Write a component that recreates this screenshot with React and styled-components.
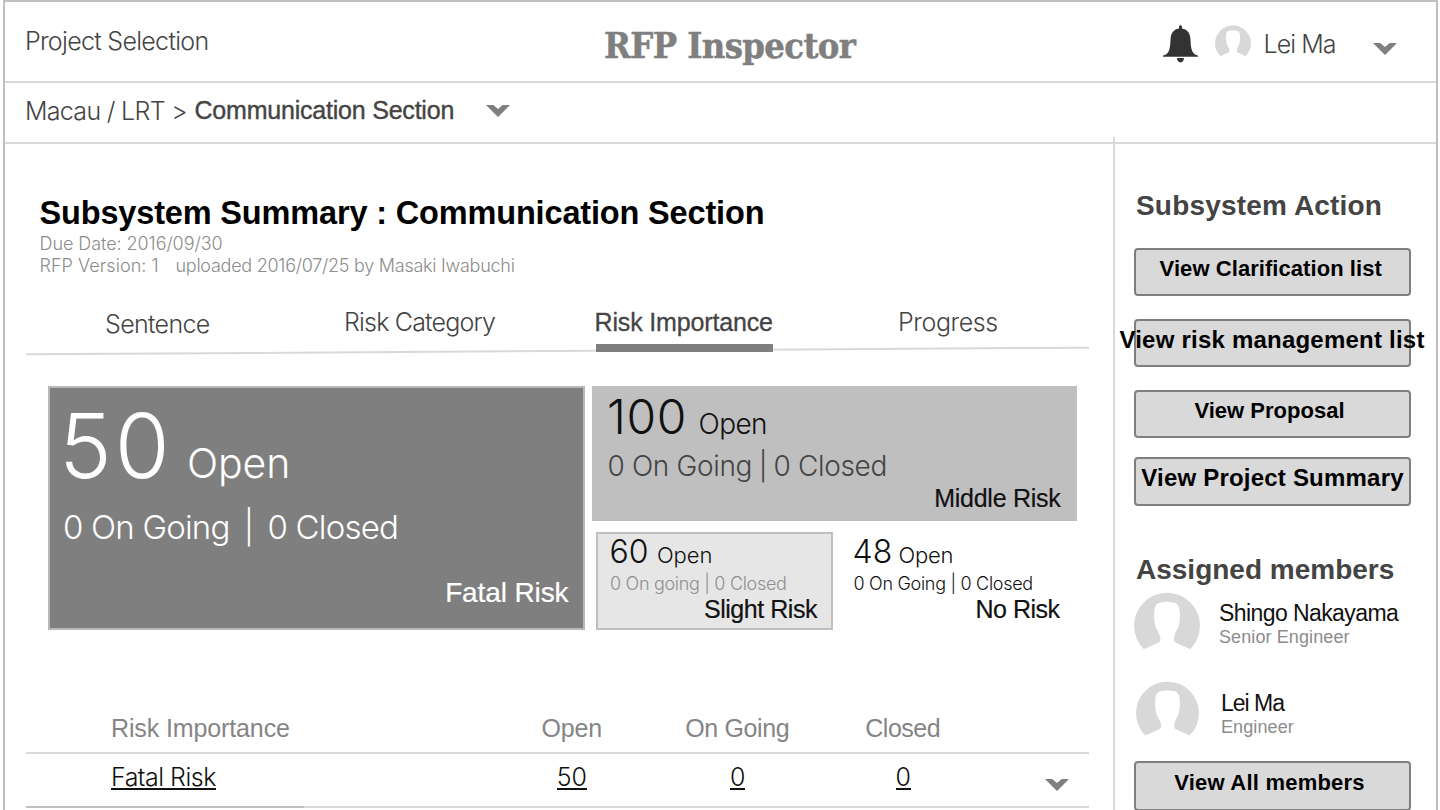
import React from 'react';
import styled, { createGlobalStyle, css } from 'styled-components';

const GlobalStyle = createGlobalStyle`
  * { box-sizing: border-box; }
  body { margin: 0; background: #fff; overflow: hidden; }
`;

const light = css`
  font-family: Inter, "Liberation Sans", sans-serif;
  font-weight: 300;
`;
const regular = css`
  font-family: "Liberation Sans", Arial, sans-serif;
  font-weight: 400;
`;
const bold = css`
  font-family: "Liberation Sans", Arial, sans-serif;
  font-weight: 700;
`;

const Frame = styled.div`
  width: 1435px;
  height: 810px;
  margin-left: 3px;
  border: 2px solid #bfbfbf;
  border-bottom: 0;
  overflow: hidden;
  white-space: pre;
  color: #444;
`;

/* Top bar */
const Header = styled.header`
  display: flex;
  align-items: flex-start;
  height: 81px;
  border-bottom: 2px solid #d9d9d9;
`;
const NavLink = styled.a`
  ${light}
  width: 599px;
  padding: 24px 0 0 20px;
  font-size: 25px;
  line-height: 30px;
  letter-spacing: -0.7px;
`;
const Brand = styled.h1`
  margin: 23px 0 0;
  font: 700 36px/40px "DejaVu Serif Condensed", "DejaVu Serif", serif;
  font-stretch: condensed;
  letter-spacing: -0.6px;
  color: #7f7f7f;
  -webkit-text-stroke: 0.5px currentColor;
`;
const UserMenu = styled.div`
  display: flex;
  align-items: flex-start;
  margin-left: auto;
  padding: 23px 39.5px 0 0;
`;
const UserName = styled.span`
  ${light}
  width: 109px;
  margin: 4px 0 0 13px;
  font-size: 25px;
  line-height: 30px;
  letter-spacing: -0.95px;
`;
const BellSvg = styled.svg`
  width: 35px;
  height: 38px;
  margin-right: 16.5px;
`;
const ChevronSvg = styled.svg`
  width: 24px;
  height: 12px;
  margin-top: ${(p) => p.$top || 0}px;
  margin-left: ${(p) => p.$left || 0}px;
  fill: #7f7f7f;
`;

/* Breadcrumb */
const Breadcrumb = styled.nav`
  display: flex;
  align-items: flex-start;
  height: 61px;
  padding: 13px 0 0 20px;
  border-bottom: 2px solid #d9d9d9;
`;
const Crumb = styled.span`
  ${light}
  width: 169.5px;
  font-size: 25px;
  line-height: 30px;
  letter-spacing: -0.7px;
`;
const CurrentCrumb = styled.span`
  ${regular}
  width: 291px;
  font-size: 25px;
  line-height: 29px;
  letter-spacing: -0.21px;
  -webkit-text-stroke: 0.4px currentColor;
`;

/* Page body */
const Body = styled.div`
  display: flex;
  align-items: flex-start;
`;
const Main = styled.main`
  width: 1108px;
  padding-top: 49px;
`;
const PageTitle = styled.h2`
  ${bold}
  margin: 0 0 0 34.5px;
  font-size: 32.5px;
  line-height: 40px;
  letter-spacing: -0.16px;
  color: #000;
`;
const Meta = styled.div`
  ${light}
  display: flex;
  margin-left: 34.5px;
  font-size: 18px;
  line-height: 22px;
  letter-spacing: ${(p) => p.$spacing}px;
  color: #8c8c8c;
`;
const Version = styled.span`
  width: 136px;
  letter-spacing: 0.05px;
`;

const Tabs = styled.div`
  display: grid;
  grid-template-columns: 239px 252px 302px 1fr;
  align-items: start;
  height: 45px;
  margin-top: 30px;
  padding-left: 100px;
  position: relative;
  z-index: 1;
`;
const Tab = styled.a`
  ${light}
  justify-self: start;
  padding-top: ${(p) => p.$drop || 0}px;
  font-size: 25px;
  line-height: 30px;
  letter-spacing: ${(p) => p.$spacing}px;
  ${(p) => p.$active && css`
    ${regular}
    width: 177px;
    height: 45px;
    padding-top: 0;
    text-indent: -1.5px;
    border-bottom: 8px solid #7f7f7f;
    -webkit-text-stroke: 0.3px currentColor;
  `}
`;
const TabRule = styled.div`
  width: 1063px;
  height: 2px;
  margin: -2px 0 0 21px;
  background: #d9d9d9;
  transform: skewY(-0.36deg);
`;

/* Risk tiles */
const Tiles = styled.section`
  display: grid;
  grid-template-columns: 537px 485px;
  column-gap: 7px;
  height: 244px;
  margin: 34px 0 0 43px;
`;
const TileStack = styled.div`
  display: flex;
  flex-direction: column;
  justify-content: space-between;
`;
const TileRow = styled.div`
  display: flex;
  justify-content: space-between;
  height: 98px;
  padding-left: 4px;
`;
const Tile = styled.article`
  display: flex;
  flex-direction: column;
  color: #111;
`;
const FatalTile = styled(Tile)`
  padding: 13px 14.5px 20px 9px;
  border: 2px solid #b8b8b8;
  background: #7f7f7f;
  color: #fff;
`;
const MiddleTile = styled(Tile)`
  height: 135px;
  padding: 6px 16.5px 8px 15px;
  background: #bfbfbf;
`;
const SmallTile = styled(Tile)`
  width: 237px;
  padding: 1px ${(p) => (p.$plain ? 15.5 : 14)}px 5px ${(p) => (p.$plain ? 10.5 : 11.5)}px;
  border: 2px solid ${(p) => (p.$plain ? 'transparent' : '#bfbfbf')};
  background: ${(p) => (p.$plain ? 'transparent' : '#e6e6e6')};
`;
const CountRow = styled.div`
  ${light}
  display: flex;
  align-items: baseline;
  height: ${(p) => p.$height}px;
  line-height: ${(p) => p.$height}px;
`;
const Count = styled.span`
  width: ${(p) => p.$width}px;
  font-size: ${(p) => p.$size}px;
  letter-spacing: ${(p) => p.$spacing}px;
`;
const CountUnit = styled.span`
  font-size: ${(p) => p.$size}px;
  letter-spacing: ${(p) => p.$spacing}px;
`;
const StatusLine = styled.div`
  ${light}
  display: flex;
  margin: ${(p) => p.$top}px 0 0 ${(p) => p.$left || 0}px;
  font-size: ${(p) => p.$size}px;
  line-height: ${(p) => p.$height}px;
  letter-spacing: ${(p) => p.$spacing}px;
  color: ${(p) => p.$color || 'inherit'};
`;
const Divider = styled.span`
  width: ${(p) => p.$width}px;
  text-align: center;
`;
const TileLabel = styled.div`
  ${regular}
  margin-top: auto;
  text-align: right;
  font-size: ${(p) => p.$size || 25}px;
  line-height: 30px;
  letter-spacing: ${(p) => p.$spacing}px;
  -webkit-text-stroke: 0.2px currentColor;
`;

/* Table */
const Table = styled.section`
  width: 1063px;
  margin: 83px 0 0 21px;
`;
const TableLine = styled.div`
  ${regular}
  display: grid;
  grid-template-columns: 463px 165.5px 165.5px 165.5px 1fr;
  align-items: start;
  justify-items: center;
  font-size: 25px;
  line-height: 30px;
`;
const TableHead = styled(TableLine)`
  height: 41px;
  border-bottom: 2px solid #d9d9d9;
  color: #858585;
`;
const TableRow = styled(TableLine)`
  ${light}
  height: 52px;
  padding-top: 8px;
  color: #111;
`;
const RowRule = styled.div`
  height: 2px;
  background: linear-gradient(to right, #bfbfbf 278px, #d9d9d9 278px);
`;
const Cell = styled.span`
  letter-spacing: ${(p) => p.$spacing || 0}px;
`;
const ValueCell = styled(Cell)`
  margin-left: 1px;
`;
const NameCell = styled(Cell)`
  justify-self: start;
  margin-left: 85px;
`;
const Underlined = styled.a`
  display: block;
  height: 28px;
  border-bottom: 2px solid #111;
`;

/* Sidebar */
const Sidebar = styled.aside`
  flex: 1;
  height: 680px;
  margin-top: -7px;
  padding: 52px 0 0 19px;
  border-left: 2px solid #d9d9d9;
`;
const SideTitle = styled.h3`
  ${bold}
  margin: ${(p) => p.$top || 0}px 0 0 ${(p) => p.$left}px;
  font-size: 28px;
  line-height: 34px;
  letter-spacing: ${(p) => p.$spacing}px;
`;
const ActionButton = styled.button`
  ${bold}
  display: flex;
  justify-content: center;
  width: 277px;
  height: ${(p) => p.$height || 48}px;
  margin: ${(p) => p.$top}px 0 0;
  padding: ${(p) => p.$drop || 1}px ${(p) => p.$shift || 0}px 0 0;
  border: 2px solid #7f7f7f;
  border-radius: 4px;
  background: #d9d9d9;
  color: #000;
  font-size: ${(p) => p.$size}px;
  line-height: 36px;
  letter-spacing: ${(p) => p.$spacing}px;
  white-space: nowrap;
`;
const MemberList = styled.div`
  margin-top: 5px;
`;
const Member = styled.div`
  display: flex;
  align-items: flex-start;
  height: ${(p) => p.$height}px;
`;
const MemberText = styled.div`
  ${regular}
  width: 200px;
  margin: ${(p) => p.$top}px 0 0 ${(p) => p.$left}px;
`;
const MemberName = styled.div`
  font-size: 23px;
  line-height: 26px;
  letter-spacing: ${(p) => p.$spacing}px;
  color: #111;
`;
const MemberRole = styled.div`
  font-size: 18px;
  line-height: 23px;
  letter-spacing: 0.1px;
  color: #8c8c8c;
`;
const AvatarSvg = styled.svg`
  flex: none;
  width: ${(p) => p.$size}px;
  height: ${(p) => p.$size}px;
  margin-left: ${(p) => p.$left || 0}px;
  fill: #d8d8d8;
`;

const Avatar = ({ size, left }) => (
  <AvatarSvg viewBox="0 0 66 66" $size={size} $left={left}>
    <path d="M9.8 57.2A33 33 0 1 1 56.2 57.2L41.5 50.6Q39.4 49.2 40 46.5Q40.2 43.2 41.6 40.4Q44.8 36 45.2 31.5Q46.4 26 45.8 19.5Q45.4 10.4 37.5 10.3Q33 9.4 28.5 10.3Q20.6 10.4 20.2 19.5Q19.6 26 20.8 31.5Q21.2 36 24.4 40.4Q26.2 43.2 26.4 46.5Q27 49.2 24.5 50.6Z" />
  </AvatarSvg>
);
const Chevron = ({ top, left }) => (
  <ChevronSvg viewBox="0 0 24 12" $top={top} $left={left}>
    <path d="M0 0H7.2L12 4L16.8 0H24L12 12Z" />
  </ChevronSvg>
);
const Bell = () => (
  <BellSvg viewBox="0 0 35 38">
    <path
      fill="#333"
      d="M17.5 0.3C18.8 0.3 19.2 1.6 19 3.6C24 4.4 27 8 27.4 13.5C27.7 19 28 23.5 29.2 26C30.4 28.8 32 30 35 30.6V31.8H0V30.6C3 30 4.6 28.8 5.8 26C7 23.5 7.3 19 7.6 13.5C8 8 11 4.4 16 3.6C15.8 1.6 16.2 0.3 17.5 0.3ZM14 33H21Q20.6 37.4 17.5 37.4Q14.4 37.4 14 33Z"
    />
  </BellSvg>
);

export default function App() {
  return (
    <Frame>
      <GlobalStyle />
      <Header>
        <NavLink>Project Selection</NavLink>
        <Brand>RFP Inspector</Brand>
        <UserMenu>
          <Bell />
          <Avatar size={36} />
          <UserName>Lei Ma</UserName>
          <Chevron top={18} />
        </UserMenu>
      </Header>
      <Breadcrumb>
        <Crumb>Macau / LRT &gt;</Crumb>
        <CurrentCrumb>Communication Section</CurrentCrumb>
        <Chevron top={9} />
      </Breadcrumb>
      <Body>
        <Main>
          <PageTitle>Subsystem Summary : Communication Section</PageTitle>
          <Meta $spacing={-0.06}>Due Date: 2016/09/30</Meta>
          <Meta $spacing={-0.26}>
            <Version>RFP Version: 1</Version>
            <span>uploaded 2016/07/25 by Masaki Iwabuchi</span>
          </Meta>
          <Tabs>
            <Tab $spacing={-0.67} $drop={2}>Sentence</Tab>
            <Tab $spacing={-0.81}>Risk Category</Tab>
            <Tab $spacing={-0.15} $active>Risk Importance</Tab>
            <Tab $spacing={-0.4}>Progress</Tab>
          </Tabs>
          <TabRule />
          <Tiles>
            <FatalTile>
              <CountRow $height={90}>
                <Count $size={89} $spacing={3} $width={128}>50</Count>
                <CountUnit $size={41} $spacing={-0.1}>Open</CountUnit>
              </CountRow>
              <StatusLine $top={16} $left={4} $size={33} $height={40} $spacing={-0.8}>
                <span>0 On Going</span>
                <Divider $width={38}>|</Divider>
                <span>0 Closed</span>
              </StatusLine>
              <TileLabel $size={28} $spacing={-0.11}>Fatal Risk</TileLabel>
            </FatalTile>
            <TileStack>
              <MiddleTile>
                <CountRow $height={50}>
                  <Count $size={48} $spacing={0.6} $width={91.5}>100</Count>
                  <CountUnit $size={28} $spacing={-0.61}>Open</CountUnit>
                </CountRow>
                <StatusLine $top={8} $left={0.5} $size={28} $height={32} $spacing={-0.35} $color="#444">
                  <span>0 On Going</span>
                  <Divider $width={21.5}>|</Divider>
                  <span>0 Closed</span>
                </StatusLine>
                <TileLabel $spacing={-0.27}>Middle Risk</TileLabel>
              </MiddleTile>
              <TileRow>
                <SmallTile>
                  <CountRow $height={34}>
                    <Count $size={32} $spacing={0} $width={47.5}>60</Count>
                    <CountUnit $size={22} $spacing={-0.1}>Open</CountUnit>
                  </CountRow>
                  <StatusLine $top={5} $left={0.5} $size={18} $height={20} $spacing={-0.31} $color="#8f8f8f">
                    <span>0 On going | 0 Closed</span>
                  </StatusLine>
                  <TileLabel $spacing={-0.46}>Slight Risk</TileLabel>
                </SmallTile>
                <SmallTile $plain>
                  <CountRow $height={34}>
                    <Count $size={32} $spacing={0} $width={46}>48</Count>
                    <CountUnit $size={22} $spacing={-0.23}>Open</CountUnit>
                  </CountRow>
                  <StatusLine $top={5} $left={1} $size={18} $height={20} $spacing={-0.3}>
                    <span>0 On Going | 0 Closed</span>
                  </StatusLine>
                  <TileLabel $spacing={-0.5}>No Risk</TileLabel>
                </SmallTile>
              </TileRow>
            </TileStack>
          </Tiles>
          <Table>
            <TableHead>
              <NameCell $spacing={-0.12}>Risk Importance</NameCell>
              <Cell $spacing={-0.2}>Open</Cell>
              <Cell $spacing={-0.35}>On Going</Cell>
              <Cell $spacing={-0.48}>Closed</Cell>
            </TableHead>
            <TableRow>
              <NameCell $spacing={-0.5}><Underlined>Fatal Risk</Underlined></NameCell>
              <Cell $spacing={-0.2}><Underlined>50</Underlined></Cell>
              <ValueCell><Underlined>0</Underlined></ValueCell>
              <ValueCell><Underlined>0</Underlined></ValueCell>
              <Chevron top={17} left={39} />
            </TableRow>
            <RowRule />
          </Table>
        </Main>
        <Sidebar>
          <SideTitle $left={2} $spacing={0.18}>Subsystem Action</SideTitle>
          <ActionButton $top={25} $size={22} $spacing={0.06} $shift={3.5}>View Clarification list</ActionButton>
          <ActionButton $top={23} $size={24} $spacing={0.22} $shift={1}>View risk management list</ActionButton>
          <ActionButton $top={23} $size={22} $spacing={0.01} $shift={6}>View Proposal</ActionButton>
          <ActionButton $top={19} $height={49} $size={24} $spacing={0.21}>View Project Summary</ActionButton>
          <SideTitle $top={47} $left={2} $spacing={0}>Assigned members</SideTitle>
          <MemberList>
            <Member $height={89}>
              <Avatar size={66} />
              <MemberText $left={19} $top={8}>
                <MemberName $spacing={-0.58}>Shingo Nakayama</MemberName>
                <MemberRole>Senior Engineer</MemberRole>
              </MemberText>
            </Member>
            <Member $height={80}>
              <Avatar size={63} left={1.5} />
              <MemberText $left={22.5} $top={8.5}>
                <MemberName $spacing={-1}>Lei Ma</MemberName>
                <MemberRole>Engineer</MemberRole>
              </MemberText>
            </Member>
          </MemberList>
          <ActionButton $top={0} $height={50} $drop={2} $size={22} $spacing={0.22} $shift={6}>View All members</ActionButton>
        </Sidebar>
      </Body>
    </Frame>
  );
}
